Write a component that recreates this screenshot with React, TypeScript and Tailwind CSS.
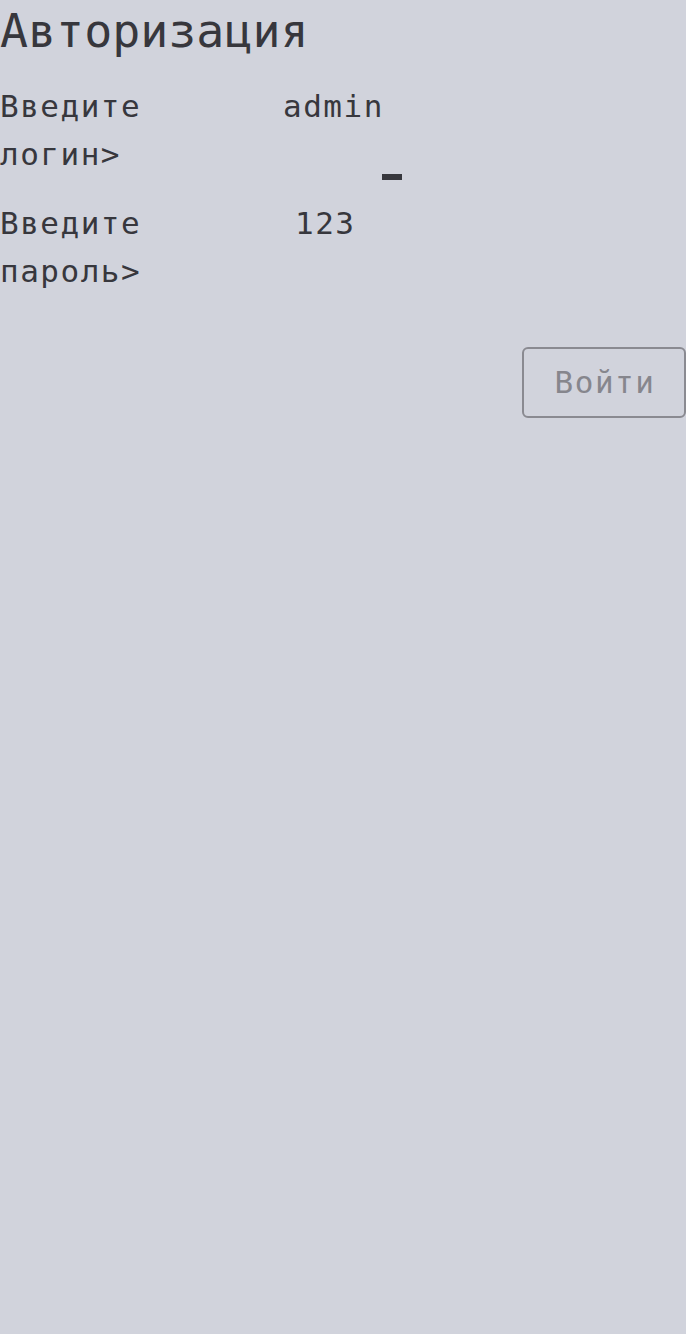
import React from "react";

export default function App() {
  const mono = { fontFamily: '"DejaVu Sans Mono", "Liberation Mono", monospace' };
  return (
    <div
      className="min-h-[1334px] w-[686px] bg-[#d1d3dc] pt-[4px] text-[#37373d]"
      style={mono}
    >
      <h1 className="text-[46.6px] leading-[55px] font-normal">Авторизация</h1>

      <div className="mt-[23px] flex">
        <div className="w-[150px] text-[31px] leading-[48px] tracking-[1.5px]">
          Введите логин&gt;
        </div>
        <div className="ml-[133px] flex flex-col">
          <div className="text-[31px] leading-[48px] tracking-[1.5px]">admin</div>
          <div className="ml-[99px] mt-[44px] h-[6px] w-[20px] bg-[#37373d]" />
        </div>
      </div>

      <div className="mt-[19px] flex">
        <div className="w-[150px] text-[31px] leading-[48px] tracking-[1.5px]">
          Введите пароль&gt;
        </div>
        <div className="ml-[145px] text-[31px] leading-[48px] tracking-[1.5px]">123</div>
      </div>

      <div className="mt-[52px] flex justify-end">
        <button className="flex h-[71px] w-[164px] items-center justify-center rounded-[6px] border-2 border-[#8a8a91] bg-transparent pl-[2px] text-[31px] tracking-[1.5px] text-[#86868d]">
          Войти
        </button>
      </div>
    </div>
  );
}
